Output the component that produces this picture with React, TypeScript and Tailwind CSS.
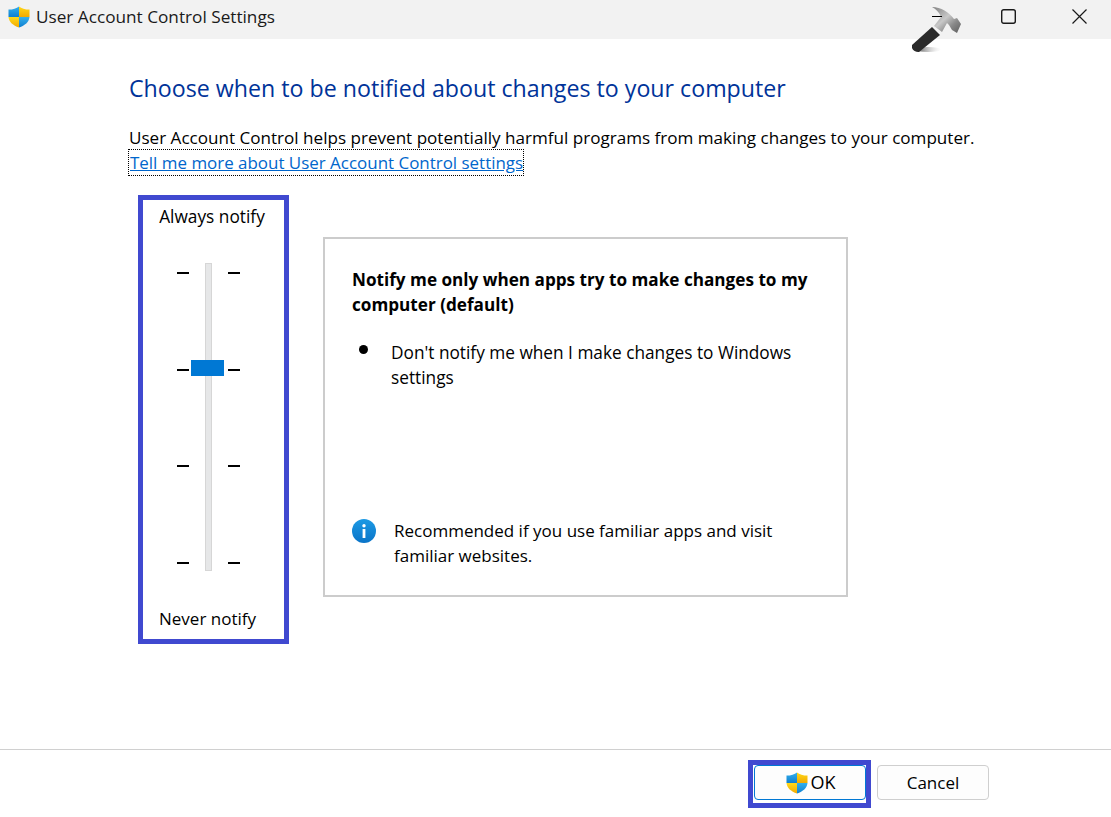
const font = { fontFamily: '"Open Sans", sans-serif' }

function Shield({ className, id }: { className: string; id: string }) {
  return (
    <svg viewBox="0 0 22 22" className={className}>
      <defs>
        <linearGradient id={`${id}-b`} x1="0" y1="0" x2="0" y2="1">
          <stop offset="0" stopColor="#35b0ec" />
          <stop offset="1" stopColor="#0f7fd0" />
        </linearGradient>
        <linearGradient id={`${id}-y`} x1="0" y1="0" x2="0" y2="1">
          <stop offset="0" stopColor="#ffd91a" />
          <stop offset="1" stopColor="#f2a900" />
        </linearGradient>
      </defs>
      <path d="M11 0.5C8.5 2.6 5 3.6 0.5 3.6V11H11Z" fill={`url(#${id}-b)`} />
      <path d="M11 0.5C13.5 2.6 17 3.6 21.5 3.6V11H11Z" fill={`url(#${id}-y)`} />
      <path d="M0.5 11C1 16 5 19.5 11 21.5V11Z" fill={`url(#${id}-y)`} />
      <path d="M21.5 11C21 16 17 19.5 11 21.5V11Z" fill={`url(#${id}-b)`} />
    </svg>
  )
}

function Hammer() {
  return (
    <svg viewBox="0 0 50 48" className="absolute left-[911px] top-[6px] h-[48px] w-[50px]">
      <defs>
        <linearGradient id="head" x1="0" y1="0" x2="1" y2="1">
          <stop offset="0" stopColor="#7f7f7f" />
          <stop offset="0.45" stopColor="#c8c8c8" />
          <stop offset="0.7" stopColor="#8a8a8a" />
          <stop offset="1" stopColor="#5c5c5c" />
        </linearGradient>
        <linearGradient id="shadow" x1="0" y1="0" x2="1" y2="0">
          <stop offset="0" stopColor="#444" />
          <stop offset="1" stopColor="#ccc" stopOpacity="0" />
        </linearGradient>
      </defs>
      <ellipse cx="17" cy="43.5" rx="13" ry="2.5" fill="url(#shadow)" />
      <path d="M21 1C30 1 38 6 43 13L46 12L50 18L46 27L41 24L38 19L36 17L31 26L23 20L30 11C28 6 25 3 21 1Z" fill="url(#head)" />
      <path d="M21 21L29 29L8 46C6 46.500 2 45 1 42L1 39Z" fill="#2a2a2a" />
    </svg>
  )
}

function Ticks() {
  return (
    <div className="mt-[2px] flex h-[292px] flex-col justify-between">
      <div className="h-[2px] w-[12px] bg-black" />
      <div className="h-[2px] w-[12px] bg-black" />
      <div className="h-[2px] w-[12px] bg-black" />
      <div className="h-[2px] w-[12px] bg-black" />
    </div>
  )
}

export default function App() {
  return (
    <div className="relative flex h-[817px] w-[1111px] flex-col overflow-hidden bg-white text-[17px] text-black" style={font}>
      {/* Title bar */}
      <div className="flex h-[39px] items-center bg-[#f2f2f2] pb-[6px] pl-[8px]">
        <Shield id="title" className="h-[22px] w-[22px]" />
        <span className="ml-[6px] text-[17.2px] text-[#1a1a1a]">User Account Control Settings</span>
        <div className="ml-auto flex items-center pr-[24px]">
          <div className="relative z-10 h-[1px] w-[10px] bg-black" />
          <svg viewBox="0 0 15 15" className="ml-[59px] h-[15px] w-[15px]" fill="none" stroke="#1a1a1a" strokeWidth="1.4">
            <rect x="0.7" y="0.7" width="13.6" height="13.6" rx="2" />
          </svg>
          <svg viewBox="0 0 15 15" className="ml-[56px] h-[15px] w-[15px]" fill="none" stroke="#1a1a1a" strokeWidth="1.2">
            <path d="M0.5 0.5L14.500 14.500M14.500 0.5L0.5 14.500" />
          </svg>
        </div>
      </div>
      <Hammer />

      {/* Content */}
      <div className="flex flex-1 flex-col pl-[129px]">
        <h1 className="mt-[32px] text-[23.2px] leading-[34px] text-[#003399]">Choose when to be notified about changes to your computer</h1>
        <p className="mt-[20px] text-[17.08px] leading-[25px]">User Account Control helps prevent potentially harmful programs from making changes to your computer.</p>
        <a className="w-fit pl-px text-[16.95px] text-[#0066cc] underline outline-1 outline-dotted outline-black leading-[25px]">Tell me more about User Account Control settings</a>

        <div className="mt-[20px] flex items-start">
          {/* Slider panel */}
          <div className="ml-[9px] flex h-[449px] w-[151px] flex-col items-center border-[5px] border-[#4049d0]">
            <div className="mt-[4px] -ml-[3px] text-[17.3px] leading-[25px]">Always notify</div>
            <div className="relative mt-[34px] -ml-[10px] flex h-[308px] items-center gap-[16px]">
              <Ticks />
              <div className="h-[308px] w-[7px] border border-[#d6d6d6] bg-[#e6e7e8]" />
              <Ticks />
              <div className="absolute left-[14px] top-[97px] h-[16px] w-[33px] bg-[#0078d4]" />
            </div>
            <div className="mt-[35px] -ml-[12px] leading-[25px]">Never notify</div>
          </div>

          {/* Description box */}
          <div className="ml-[34px] mt-[42px] flex h-[360px] w-[525px] flex-col border-2 border-[#cccccc] pl-[27px] pr-[20px]">
            <p className="mt-[28px] text-[17.15px] font-bold leading-[25px]">Notify me only when apps try to make changes to my computer (default)</p>
            <div className="mt-[23px] flex">
              <div className="ml-[7px] mt-[5px] h-[9px] w-[9px] shrink-0 rounded-full bg-black blur-[0.5px]" />
              <p className="ml-[23px] w-[420px] text-[17.25px] leading-[25px]">Don't notify me when I make changes to Windows settings</p>
            </div>
            <div className="mt-auto mb-[27px] flex">
              <svg viewBox="0 0 24 24" className="mt-[1px] h-[24px] w-[24px] shrink-0">
                <defs>
                  <linearGradient id="info" x1="0" y1="0" x2="0" y2="1">
                    <stop offset="0" stopColor="#1d9ae4" />
                    <stop offset="1" stopColor="#0a74c8" />
                  </linearGradient>
                </defs>
                <circle cx="12" cy="12" r="12" fill="url(#info)" />
                <circle cx="12" cy="6.800" r="1.700" fill="#fff" />
                <rect x="10.600" y="10" width="2.800" height="9" fill="#fff" />
              </svg>
              <p className="ml-[18px] w-[400px] leading-[25px]">Recommended if you use familiar apps and visit familiar websites.</p>
            </div>
          </div>
        </div>
      </div>

      {/* Footer */}
      <div className="flex h-[68px] items-start justify-end border-t border-[#d0d0d0] pr-[122px] pt-[10px]">
        <div className="border-[5px] border-[#4049d0] bg-white pb-[3px] pl-px">
          <button className="flex h-[35px] w-[112px] items-center justify-center rounded-[4px] border border-[#0078d4] bg-[#fdfdfd] pl-[2px]">
            <Shield id="ok" className="h-[22px] w-[22px]" />
            <span className="ml-[2px] text-[18px]">OK</span>
          </button>
        </div>
        <button className="ml-[6px] mt-[5px] h-[35px] w-[112px] rounded-[4px] border border-[#cfcfcf] bg-[#fdfdfd] pt-px text-[17px]">Cancel</button>
      </div>
    </div>
  )
}
